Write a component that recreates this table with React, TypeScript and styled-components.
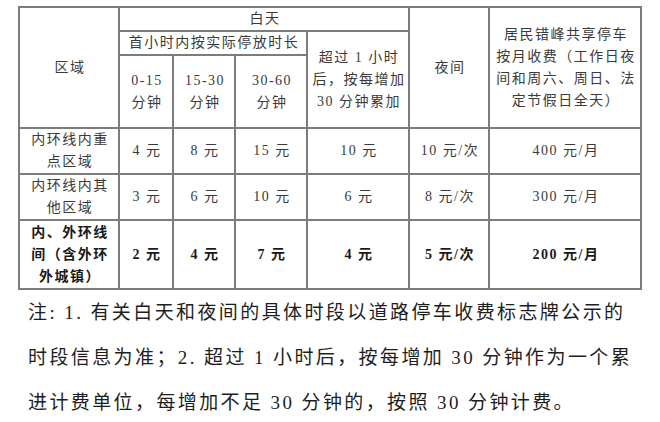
import styled, { createGlobalStyle } from "styled-components";

const GlobalStyle = createGlobalStyle`
  html, body {
    margin: 0;
    padding: 0;
    background: #ffffff;
  }
  body {
    font-family: "Liberation Serif", "Noto Sans CJK SC", serif;
    color: #333;
  }
`;

interface PriceRow {
  area: string[];
  prices: string[];
  night: string;
  monthly: string;
  bold?: boolean;
  height: number;
}

const priceRows: PriceRow[] = [
  {
    area: ["内环线内重", "点区域"],
    prices: ["4 元", "8 元", "15 元", "10 元"],
    night: "10 元/次",
    monthly: "400 元/月",
    height: 46,
  },
  {
    area: ["内环线内其", "他区域"],
    prices: ["3 元", "6 元", "10 元", "6 元"],
    night: "8 元/次",
    monthly: "300 元/月",
    height: 46,
  },
  {
    area: ["内、外环线", "间（含外环", "外城镇）"],
    prices: ["2 元", "4 元", "7 元", "4 元"],
    night: "5 元/次",
    monthly: "200 元/月",
    bold: true,
    height: 69,
  },
];

const colWidths = [100, 54, 62, 72, 102, 80, 152];

const lines = (parts: string[]) =>
  parts.map((p, i) => (
    <span key={i}>
      {i > 0 && <br />}
      {p}
    </span>
  ));

export default function App() {
  return (
    <Page>
      <GlobalStyle />
      <FeeTable>
        <colgroup>
          {colWidths.map((w, i) => (
            <col key={i} style={{ width: w }} />
          ))}
        </colgroup>
        <tbody>
          <Row $height={24}>
            <Cell rowSpan={3}>区域</Cell>
            <Cell colSpan={4}>白天</Cell>
            <Cell rowSpan={3}>夜间</Cell>
            <Cell rowSpan={3}>
              {lines([
                "居民错峰共享停车",
                "按月收费（工作日夜",
                "间和周六、周日、法",
                "定节假日全天）",
              ])}
            </Cell>
          </Row>
          <Row $height={22}>
            <Cell colSpan={3}>首小时内按实际停放时长</Cell>
            <Cell rowSpan={2}>
              {lines(["超过 1 小时", "后，按每增加", "30 分钟累加"])}
            </Cell>
          </Row>
          <Row $height={73}>
            <Cell>{lines(["0-15", "分钟"])}</Cell>
            <Cell>{lines(["15-30", "分钟"])}</Cell>
            <Cell>{lines(["30-60", "分钟"])}</Cell>
          </Row>
          {priceRows.map((row, i) => (
            <Row key={i} $height={row.height}>
              <Cell $bold={row.bold}>{lines(row.area)}</Cell>
              {row.prices.map((p, j) => (
                <Cell key={j} $bold={row.bold}>
                  {p}
                </Cell>
              ))}
              <Cell $bold={row.bold}>{row.night}</Cell>
              <Cell $bold={row.bold}>{row.monthly}</Cell>
            </Row>
          ))}
        </tbody>
      </FeeTable>
      <Note>
        <NoteLine $justify>
          注: 1. 有关白天和夜间的具体时段以道路停车收费标志牌公示的
        </NoteLine>
        <NoteLine $justify>
          时段信息为准；2. 超过 1 小时后，按每增加 30 分钟作为一个累
        </NoteLine>
        <NoteLine>进计费单位，每增加不足 30 分钟的，按照 30 分钟计费。</NoteLine>
      </Note>
    </Page>
  );
}

const Page = styled.div`
  width: 660px;
  height: 422px;
  padding: 6px 0 0 18px;
  box-sizing: border-box;
  overflow: hidden;
`;

const FeeTable = styled.table`
  border-collapse: collapse;
  table-layout: fixed;
  width: 624px;
`;

const Row = styled.tr<{ $height: number }>`
  height: ${(p) => p.$height}px;
`;

const Cell = styled.td<{ $bold?: boolean }>`
  border: 2px solid #7c7c7c;
  padding: 0 0 0 2px;
  text-align: center;
  vertical-align: middle;
  font-size: 14px;
  line-height: 22px;
  letter-spacing: 1.5px;
  font-weight: ${(p) => (p.$bold ? 700 : 400)};
  color: ${(p) => (p.$bold ? "#1a1a1a" : "#3a3a3a")};
  white-space: nowrap;
`;

const Note = styled.div`
  margin-top: 0;
  padding-left: 10px;
  width: 596px;
`;

const NoteLine = styled.div<{ $justify?: boolean }>`
  font-size: 19px;
  line-height: 45px;
  letter-spacing: 2.4px;
  color: #1e1e1e;
  white-space: nowrap;
  text-align: ${(p) => (p.$justify ? "justify" : "left")};
  text-align-last: ${(p) => (p.$justify ? "justify" : "left")};
`;
